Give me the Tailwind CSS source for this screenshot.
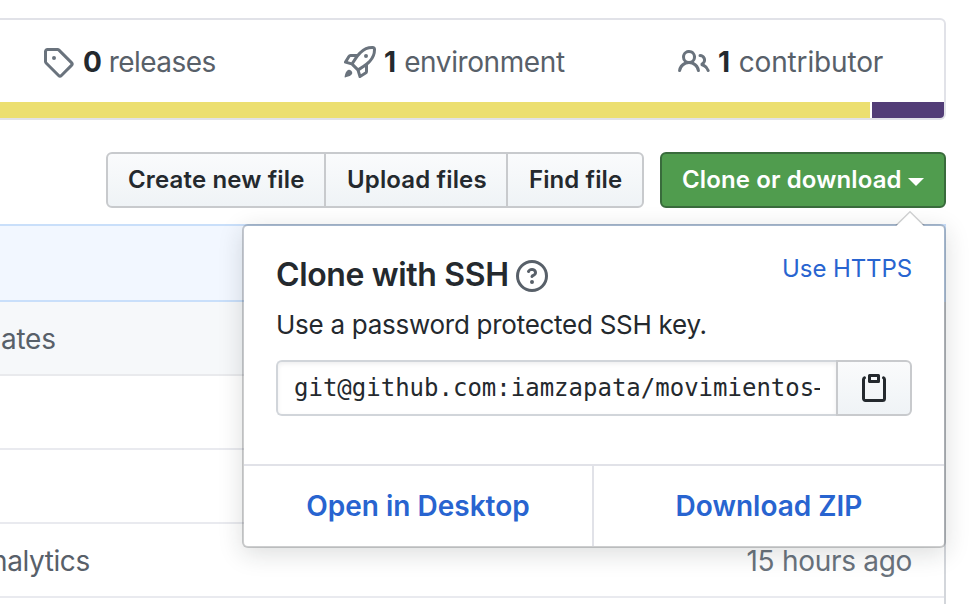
<!DOCTYPE html>
<html lang="en">
<head>
<meta charset="utf-8">
<title>Clone or download</title>
<script src="https://cdn.jsdelivr.net/npm/@tailwindcss/browser@4"></script>
</head>
<body class="relative h-[604px] w-[974px] overflow-hidden bg-white pt-[18px] pr-7 font-['Inter','Liberation_Sans',sans-serif] text-[#24292e] whitespace-nowrap">

<section class="h-[102px] overflow-hidden rounded-r-md border-2 border-l-0 border-[#e1e2e8]">
  <div class="flex h-[82px] items-center pt-px text-[28px] text-[#586069]">
    <div class="flex w-[302px] items-center pl-[42px]">
      <svg class="size-8 shrink-0 fill-[#6a737d]" viewBox="0 0 16 16"><path fill-rule="evenodd" d="M2.5 7.775V2.75a.25.25 0 01.25-.25h5.025a.25.25 0 01.177.073l6.25 6.25a.25.25 0 010 .354l-5.025 5.025a.25.25 0 01-.354 0l-6.25-6.25a.25.25 0 01-.073-.177zm-1.5 0V2.75C1 1.784 1.784 1 2.75 1h5.025c.464 0 .91.184 1.238.513l6.25 6.25a1.75 1.75 0 010 2.474l-5.026 5.026a1.75 1.75 0 01-2.474 0l-6.25-6.25A1.75 1.75 0 011 7.775zM6 5a1 1 0 100 2 1 1 0 000-2z"/></svg>
      <span class="ml-[9px] tracking-[-0.55px]"><b class="font-bold text-[#24292e]">0</b> releases</span>
    </div>
    <div class="flex w-[334px] items-center pl-[42px]">
      <svg class="size-8 shrink-0 fill-[#6a737d]" viewBox="0 0 16 16"><path fill-rule="evenodd" d="M14.064 0a8.75 8.75 0 00-6.187 2.563l-.459.458c-.314.314-.616.641-.904.979H3.31a1.75 1.75 0 00-1.49.833L.11 7.607a.75.75 0 00.418 1.11l3.102.954c.037.051.079.1.124.145l2.429 2.428c.046.046.094.088.145.125l.954 3.102a.75.75 0 001.11.418l2.774-1.707a1.75 1.75 0 00.833-1.49V9.485c.338-.288.665-.59.979-.904l.458-.459A8.75 8.75 0 0016 1.936V1.75A1.75 1.75 0 0014.25 0h-.186zM10.5 10.625c-.088.06-.177.118-.266.175l-2.35 1.521.548 1.783 1.949-1.2a.25.25 0 00.119-.213v-2.066zM3.678 8.116L5.2 5.766c.058-.09.117-.178.176-.266H3.309a.25.25 0 00-.213.119l-1.2 1.95 1.782.547zm5.26-4.493A7.25 7.25 0 0114.063 1.5h.186a.25.25 0 01.25.25v.186a7.25 7.25 0 01-2.123 5.127l-.459.458a15.21 15.21 0 01-2.499 2.02l-2.317 1.5-2.143-2.143 1.5-2.317a15.25 15.25 0 012.02-2.5l.458-.458h.002zM12 5a1 1 0 11-2 0 1 1 0 012 0zm-8.44 9.56a1.5 1.5 0 10-2.12-2.12c-.734.73-1.047 2.332-1.15 3.003a.23.23 0 00.265.265c.671-.103 2.273-.416 3.005-1.148z"/></svg>
      <span class="ml-2 tracking-[-0.4px]"><b class="mr-px font-bold text-[#24292e]">1</b> environment</span>
    </div>
    <div class="flex items-center pl-[42px]">
      <svg class="size-8 shrink-0 fill-[#6a737d]" viewBox="0 0 16 16"><path fill-rule="evenodd" d="M5.5 3.5a2 2 0 100 4 2 2 0 000-4zM2 5.5a3.5 3.5 0 115.898 2.549 5.507 5.507 0 013.034 4.084.75.75 0 11-1.482.235 4.001 4.001 0 00-7.9 0 .75.75 0 01-1.482-.236A5.507 5.507 0 013.102 8.05 3.49 3.49 0 012 5.5zM11 4a.75.75 0 100 1.5 1.5 1.5 0 01.666 2.844.75.75 0 00-.416.672v.352a.75.75 0 00.574.73c1.2.289 2.162 1.2 2.522 2.372a.75.75 0 101.434-.44 5.01 5.01 0 00-2.56-3.012A3 3 0 0011 4z"/></svg>
      <span class="ml-2 tracking-[-0.15px]"><b class="mr-px font-bold text-[#24292e]">1</b> contributor</span>
    </div>
  </div>
  <div class="flex h-4 gap-0.5">
    <div class="w-[870px] bg-[#ecdf70]"></div>
    <div class="flex-1 bg-[#523d77]"></div>
  </div>
</section>

<div class="mt-8 flex h-14 justify-end text-2xl font-semibold">
  <div class="flex w-[538px] overflow-hidden rounded-md border-2 border-[#c8cacd] bg-linear-to-b from-[#fafbfc] to-[#eff3f6] pb-px">
    <button class="-mb-px w-[218px] border-r-2 border-[#c8cacd] pl-5 text-left tracking-[0.15px]"><span>Create new file</span></button>
    <button class="-mb-px w-[182px] border-r-2 border-[#c8cacd] pl-[21px] text-left tracking-[0.15px]"><span>Upload files</span></button>
    <button class="-mb-px pl-[21px] text-left tracking-[0.1px]"><span>Find file</span></button>
  </div>
  <button class="ml-4 flex w-[286px] items-center rounded-md border-2 border-[#396b3c] bg-[#509c4e] pl-5 tracking-[0.12px] text-white"><span>Clone or download</span><i class="mt-1 ml-1.5 border-x-8 border-t-8 border-x-transparent border-t-white"></i></button>
</div>

<section class="mt-4">
  <div class="h-[78px] border-2 border-l-0 border-[#c9dffa] bg-[#f2f7ff]"></div>
  <div class="border-r-2 border-[#d3d6db] text-[28px] text-[#586069]">
    <div class="flex h-[74px] items-center border-b-2 border-[#e9eaed] bg-[#f6f8fa] pt-px"><span class="ml-px tracking-[-0.25px]">ates</span></div>
    <div class="h-[74px] border-b-2 border-[#e9eaef]"></div>
    <div class="h-[74px] border-b-2 border-[#e9eaef]"></div>
    <div class="flex h-[74px] items-center justify-between border-b-2 border-[#e9eaef] pt-px pr-8"><span class="-ml-[9px] tracking-[-0.4px]">nalytics</span><span class="tracking-[-0.3px] text-[#6a737d]">15 hours ago</span></div>
    <div class="h-1.5"></div>
  </div>
</section>

<div class="absolute top-[224px] left-[242px] h-[324px] w-[704px] rounded-md border-2 border-[#1b1f23]/22 bg-white bg-clip-padding shadow-[0_6px_24px_rgba(27,31,35,0.15)]">
  <svg class="absolute -top-4 right-[18px] h-4 w-8" viewBox="0 0 32 16"><path d="M2 16 16 2 30 16Z" fill="#fff"/><path d="M2 15.500 16 1.800 30 15.500" fill="none" stroke="#1b1f23" stroke-opacity=".2" stroke-width="1.500"/></svg>
  <div class="h-[238px] px-8 pt-7">
    <div class="flex justify-between">
      <h4 class="flex h-[42px] items-center text-[32px] font-semibold"><span class="tracking-[-0.36px]">Clone with SSH</span>
        <svg class="mt-0.5 ml-[7px] size-8 shrink-0 fill-[#586069]" viewBox="0 0 16 16"><path fill-rule="evenodd" d="M8 1.500a6.500 6.500 0 100 13 6.500 6.500 0 000-13zM0 8a8 8 0 1116 0A8 8 0 010 8zm9 3a1 1 0 11-2 0 1 1 0 012 0zM6.920 6.085c.081-.16.19-.299.34-.398.145-.097.371-.187.74-.187.28 0 .553.087.738.225A.613.613 0 019 6.250c0 .177-.04.264-.077.318a.956.956 0 01-.277.245c-.076.051-.158.1-.258.161l-.007.004a7.728 7.728 0 00-.313.195 2.416 2.416 0 00-.692.661.75.75 0 001.248.832.956.956 0 01.276-.245 6.300 6.300 0 01.26-.16l.006-.004c.093-.057.204-.123.313-.195.222-.149.487-.355.692-.662.214-.32.329-.702.329-1.150 0-.76-.36-1.348-.863-1.725A2.760 2.760 0 008 4c-.631 0-1.155.16-1.572.438-.413.276-.68.638-.849.977a.75.75 0 101.342.67z"/></svg>
      </h4>
      <a class="flex h-7 items-center pt-px text-2xl tracking-[-0.1px] text-[#2864d0]"><span>Use HTTPS</span></a>
    </div>
    <p class="mt-2 h-10 text-[26px] leading-[42px] tracking-[-0.27px]"><span>Use a password protected SSH key.</span></p>
    <div class="mt-4 flex h-14">
      <div class="flex w-[560px] items-center overflow-hidden rounded-l-md border-2 border-r-0 border-[#d1d5da] pr-4 pl-4 shadow-[inset_0_2px_4px_rgba(27,31,35,0.075)]"><div class="w-[526px] overflow-hidden font-['DejaVu_Sans_Mono',monospace] text-2xl">git@github.com:iamzapata/movimientos<span class="-ml-1">-</span></div></div>
      <button class="flex w-[76px] items-center justify-center rounded-r-md border-2 border-[#c8cacd] bg-linear-to-b from-[#fafbfc] to-[#eff3f6]"><svg class="size-8 fill-[#24292e]" viewBox="0 0 16 16"><path fill-rule="evenodd" d="M5.750 1a.75.75 0 00-.75.75v3c0 .414.336.75.75.75h4.500a.75.75 0 00.75-.75v-3a.75.75 0 00-.75-.75h-4.500zm.75 3V2.500h3V4h-3zm-2.874-.467a.75.75 0 00-.752-1.298A1.750 1.750 0 002 3.750v9.500c0 .966.784 1.750 1.750 1.750h8.500A1.750 1.750 0 0014 13.250v-9.500a1.750 1.750 0 00-.874-1.515.75.75 0 10-.752 1.298.25.25 0 01.126.217v9.500a.25.25 0 01-.25.25h-8.500a.25.25 0 01-.25-.25v-9.500a.25.25 0 01.126-.217z"/></svg></button>
    </div>
  </div>
  <div class="flex h-[82px] border-t-2 border-[#e1e2e8] text-[28px] font-semibold text-[#2864d0]">
    <a class="flex w-[350px] items-center justify-center border-r-2 border-[#e1e2e8]"><span>Open in Desktop</span></a>
    <a class="flex flex-1 items-center justify-center"><span>Download ZIP</span></a>
  </div>
</div>
</body>
</html>
